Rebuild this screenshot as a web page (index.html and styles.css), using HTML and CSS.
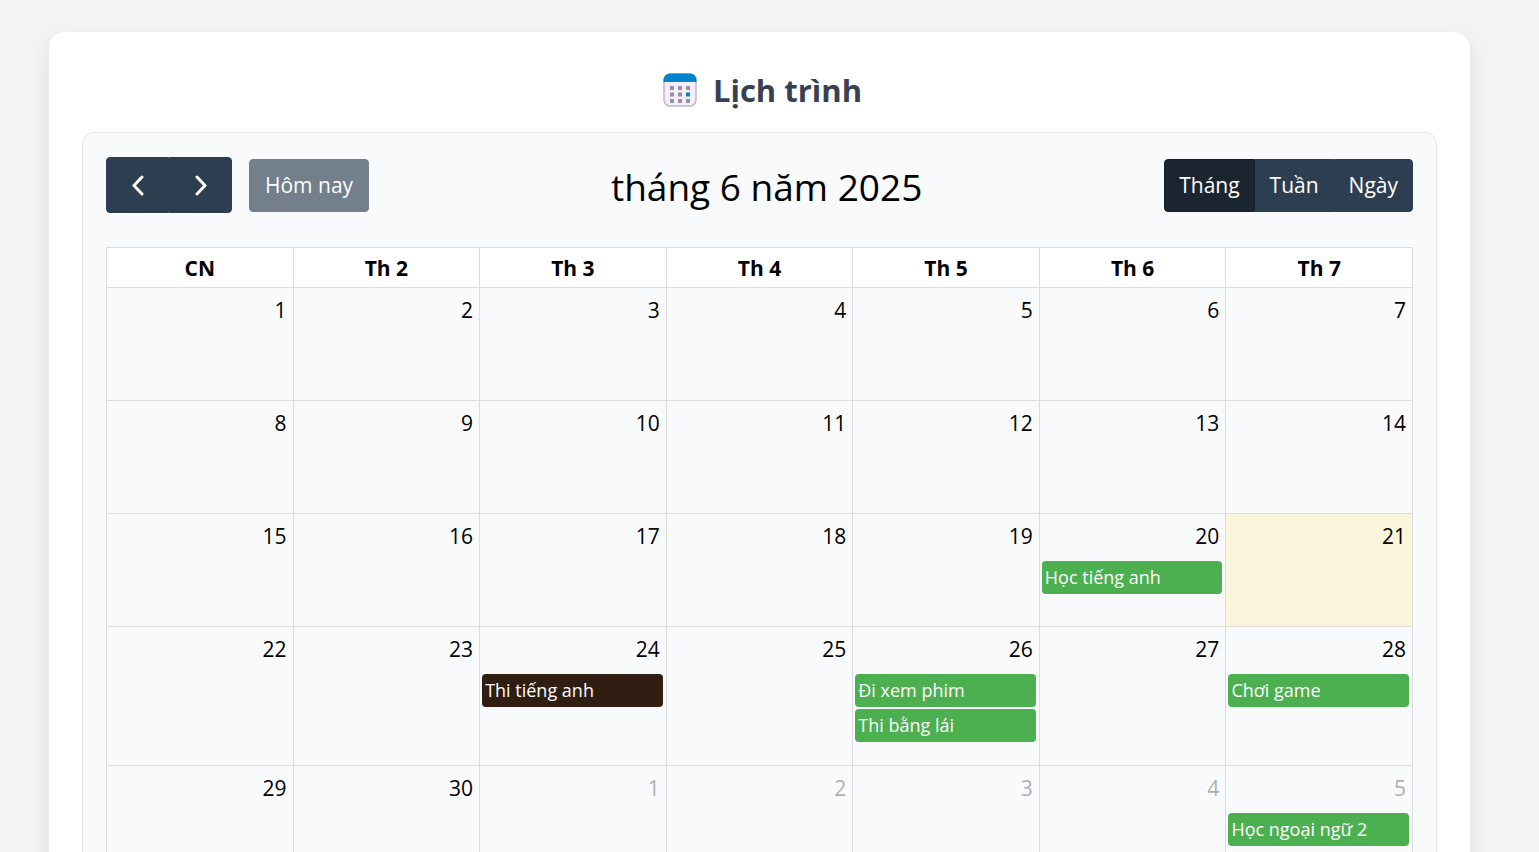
FILE: index.html
```html
<!DOCTYPE html>
<html lang="vi">
<head>
<meta charset="utf-8">
<meta name="viewport" content="width=device-width, initial-scale=1">
<title>Lịch trình</title>
<link rel="stylesheet" href="styles.css">
</head>
<body>
<main class="card">
  <h1 class="page-title">
    <svg class="page-icon" viewBox="0 0 34 34" aria-hidden="true">
      <rect x="1" y="1" width="32" height="32" rx="6" fill="#f3eef8" stroke="#bdb3c9" stroke-width="1.4"/>
      <path d="M.5 9V7A6.500 6.500 0 0 1 7 .5H27A6.500 6.500 0 0 1 33.500 7V9Z" fill="#0084ce"/>
      <path fill="#998ea4" d="M7 13h4v4H7zM15 13h4v4h-4zM23 13h4v4h-4zM7 19.500h4v4H7zM15 19.500h4v4h-4zM7 26h4v4H7zM15 26h4v4h-4zM23 26h4v4h-4z"/>
      <path fill="#0084ce" d="M23 19.500h4v4h-4z"/>
    </svg>
    <span>Lịch trình</span>
  </h1>
  <section class="calendar">
    <header class="toolbar">
      <div class="toolbar-group">
        <div class="button-group">
          <button class="button button-nav" type="button" aria-label="Tháng trước"><svg class="chevron" viewBox="0 0 22 22"><path d="M15 3 7 11.500l8 8.500"/></svg></button>
          <button class="button button-nav" type="button" aria-label="Tháng sau"><svg class="chevron" viewBox="0 0 22 22"><path d="m7 3 8 8.500L7 20"/></svg></button>
        </div>
        <button class="button button-today" type="button" disabled>Hôm nay</button>
      </div>
      <h2 class="month">tháng 6 năm 2025</h2>
      <div class="button-group">
        <button class="button button-active" type="button" aria-pressed="true">Tháng</button>
        <button class="button" type="button">Tuần</button>
        <button class="button" type="button">Ngày</button>
      </div>
    </header>
    <table class="grid">
      <thead>
        <tr><th scope="col">CN</th><th scope="col">Th 2</th><th scope="col">Th 3</th><th scope="col">Th 4</th><th scope="col">Th 5</th><th scope="col">Th 6</th><th scope="col">Th 7</th></tr>
      </thead>
      <tbody>
        <tr><td><div class="day">1</div></td><td><div class="day">2</div></td><td><div class="day">3</div></td><td><div class="day">4</div></td><td><div class="day">5</div></td><td><div class="day">6</div></td><td><div class="day">7</div></td></tr>
        <tr><td><div class="day">8</div></td><td><div class="day">9</div></td><td><div class="day">10</div></td><td><div class="day">11</div></td><td><div class="day">12</div></td><td><div class="day">13</div></td><td><div class="day">14</div></td></tr>
        <tr><td><div class="day">15</div></td><td><div class="day">16</div></td><td><div class="day">17</div></td><td><div class="day">18</div></td><td><div class="day">19</div></td><td><div class="day">20</div><div class="event">Học tiếng anh</div></td><td class="today"><div class="day">21</div></td></tr>
        <tr><td><div class="day">22</div></td><td><div class="day">23</div></td><td><div class="day">24</div><div class="event event-dark">Thi tiếng anh</div></td><td><div class="day">25</div></td><td><div class="day">26</div><div class="event">Đi xem phim</div><div class="event">Thi bằng lái</div></td><td><div class="day">27</div></td><td><div class="day">28</div><div class="event">Chơi game</div></td></tr>
        <tr><td><div class="day">29</div></td><td><div class="day">30</div></td><td class="other"><div class="day">1</div></td><td class="other"><div class="day">2</div></td><td class="other"><div class="day">3</div></td><td class="other"><div class="day">4</div></td><td class="other"><div class="day">5</div><div class="event">Học ngoại ngữ 2</div></td></tr>
      </tbody>
    </table>
  </section>
</main>
</body>
</html>
```
FILE: styles.css
```css
* { box-sizing: border-box; }

body {
  margin: 0;
  padding: 32px 69px 32px 49px;
  background: #f3f4f6;
  color: #000;
  font-family: "Open Sans", "Noto Sans", sans-serif;
  font-size: 21px;
}

.card {
  padding: 33px;
  border-radius: 16px;
  background: #fff;
  box-shadow: 0 10px 24px rgba(0, 0, 0, 0.1);
}

.page-title {
  display: flex;
  align-items: center;
  justify-content: center;
  gap: 16px;
  margin: 0 0 17px;
  padding-left: 6px;
  color: #374151;
  font-size: 31px;
  font-weight: 700;
  line-height: 50px;
}

.page-icon { width: 34px; height: 34px; }

.calendar {
  padding: 24px 23px;
  border: 1px solid #e5e7eb;
  border-radius: 12px;
  background: #f9fafc;
}

.toolbar {
  display: flex;
  align-items: center;
  justify-content: space-between;
  margin-bottom: 34px;
}

.toolbar-group { display: flex; align-items: center; gap: 17px; }

.button-group { display: flex; }

.button {
  height: 53px;
  padding: 0 14px;
  border: 1px solid #2c3e50;
  border-radius: 4px;
  background: #2c3e50;
  color: #fff;
  font: inherit;
  line-height: 32px;
}

.button-group .button:not(:last-child) { border-top-right-radius: 0; border-bottom-right-radius: 0; }
.button-group .button:not(:first-child) { border-top-left-radius: 0; border-bottom-left-radius: 0; }

.button-group .button-nav {
  display: flex;
  align-items: center;
  justify-content: center;
  width: 63px;
  height: 56px;
}

.chevron {
  width: 22px;
  height: 22px;
  fill: none;
  stroke: #fff;
  stroke-width: 3;
  stroke-linecap: round;
  stroke-linejoin: round;
}

.button-today { padding: 0 15px; opacity: 0.65; }

.button-group .button-active { border-color: #151e27; background: #1a252f; }

.month {
  margin: 0;
  padding-top: 4px;
  font-size: 37px;
  font-weight: 400;
  line-height: 52px;
}

.grid {
  width: 100%;
  border-collapse: collapse;
  table-layout: fixed;
}

.grid th,
.grid td { border: 1px solid #ddd; }

.grid th {
  height: 40px;
  padding: 0;
  background: #fff;
  font-weight: 700;
  line-height: 32px;
}

.grid td {
  height: 113px;
  padding: 6px 3px 21px 2px;
  vertical-align: top;
}

.day {
  margin-bottom: 8px;
  padding-right: 3px;
  line-height: 33px;
  text-align: right;
}

.other .day { opacity: 0.3; }

.today { background: #fbf5dc; }

.event {
  margin-bottom: 2px;
  padding: 0 3px;
  border-radius: 4px;
  background: #4caf50;
  color: #fff;
  font-size: 18px;
  line-height: 33px;
  white-space: nowrap;
  overflow: hidden;
}

.event-dark { background: #301e12; }
```
